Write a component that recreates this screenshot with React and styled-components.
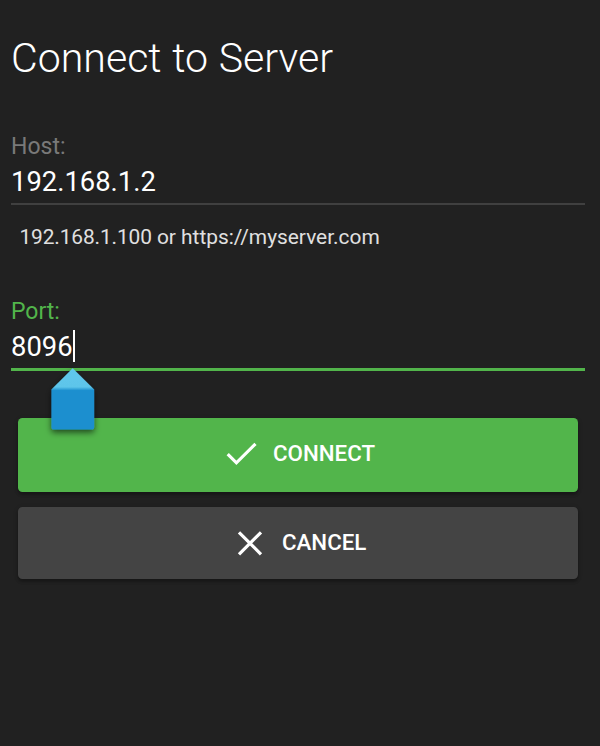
import React from 'react';
import styled, { createGlobalStyle, css } from 'styled-components';

const GlobalStyle = createGlobalStyle`
  * { box-sizing: border-box; }
  body {
    margin: 0;
    background: #212121;
    color: #fff;
    font-family: Roboto, "Liberation Sans", sans-serif;
  }
`;

const Page = styled.main`
  display: flex;
  flex-direction: column;
  height: 746px;
  padding: 34px 15px 0 11px;
  overflow: hidden;
  background: #212121;
`;

const Title = styled.h1`
  margin: 0 0 51px;
  font-size: 41.1px;
  line-height: 48px;
  font-weight: 300;
  word-spacing: 0.6px;
  white-space: nowrap;
`;

const Field = styled.div`
  display: flex;
  flex-direction: column;
  height: ${(p) => (p.$active ? '120px' : '165px')};
`;

const Label = styled.label`
  margin-bottom: 3px;
  font-size: 23px;
  line-height: 28px;
  color: ${(p) => (p.$active ? '#52b54b' : '#797979')};
`;

const Value = styled.div`
  position: relative;
  display: flex;
  height: ${(p) => (p.$active ? '42px' : '41px')};
  font-size: 27.4px;
  line-height: 36px;
  border-bottom: ${(p) => (p.$active ? '3px solid #52b54b' : '2px solid #404040')};
`;

const Hint = styled.div`
  margin: 18px 0 0 8.5px;
  font-size: 20.9px;
  line-height: 28px;
  color: #e0e0e0;
  white-space: nowrap;
`;

const Address = styled.span`
  letter-spacing: -0.13px;
`;

const Caret = styled.span`
  width: 2px;
  height: 32px;
  margin-top: 1px;
  background: #fff;
`;

const Handle = styled.svg`
  position: absolute;
  left: 30px;
  top: 36px;
  width: 64px;
  height: 76px;
  z-index: 1;
`;

const Actions = styled.div`
  display: flex;
  flex-direction: column;
  gap: 15.5px;
  padding: 0 7px;
`;

const Button = styled.button`
  display: flex;
  align-items: center;
  justify-content: flex-start;
  height: 72px;
  padding: 0 0 0 216px;
  border: 0;
  border-radius: 4.5px;
  background: #444;
  color: #fff;
  font: 500 22.3px/28px Roboto, "Liberation Sans", sans-serif;
  box-shadow: 0 3px 3px rgba(0, 0, 0, 0.22), 0 1px 5px rgba(0, 0, 0, 0.16);
  ${(p) => p.$primary && css`
    height: 73.5px;
    padding-left: 208px;
    padding-bottom: 1.5px;
    background: #52b54b;
  `}
`;

const Caption = styled.span`
  padding-bottom: 2px;
`;

const Icon = styled.svg`
  flex: none;
  width: 32px;
  height: 32px;
  margin-right: ${(p) => p.$gap};
  fill: none;
  stroke: #fff;
  stroke-width: 3.2;
`;

function SelectionHandle() {
  return (
    <Handle viewBox="0 0 64 76" aria-hidden="true">
      <defs>
        <linearGradient id="handleFill" x1="0" y1="3" x2="0" y2="64" gradientUnits="userSpaceOnUse">
          <stop offset="0" stopColor="#60c7ec" />
          <stop offset="0.31" stopColor="#5dc5ea" />
          <stop offset="0.37" stopColor="#1c8fcf" />
          <stop offset="1" stopColor="#1c8fcf" />
        </linearGradient>
        <filter id="handleShadow" x="-30%" y="-30%" width="160%" height="160%">
          <feDropShadow dx="0" dy="3" stdDeviation="3" floodColor="#000" floodOpacity="0.6" />
        </filter>
      </defs>
      <path
        d="M31.7 3.2 L53.2 24.5 V62 Q53.2 64.6 50.6 64.6 H13 Q10.4 64.6 10.4 62 V24.5 Z"
        fill="url(#handleFill)"
        filter="url(#handleShadow)"
      />
    </Handle>
  );
}

export default function App() {
  return (
    <>
      <GlobalStyle />
      <Page>
        <Title>Connect to Server</Title>
        <Field>
          <Label>Host:</Label>
          <Value>192.168.1.2</Value>
          <Hint>
            <Address>192.168.1.100</Address> or https://myserver.com
          </Hint>
        </Field>
        <Field $active>
          <Label $active>Port:</Label>
          <Value $active>
            8096
            <Caret />
            <SelectionHandle />
          </Value>
        </Field>
        <Actions>
          <Button $primary>
            <Icon $gap="15px" viewBox="0 0 32 32">
              <path d="M1.7 16.2 L10.4 24.8 L29.5 5.8" />
            </Icon>
            <Caption>CONNECT</Caption>
          </Button>
          <Button>
            <Icon $gap="16px" viewBox="0 0 32 32">
              <path d="M5 5.3 L27 27.3 M27 5.3 L5 27.3" />
            </Icon>
            <Caption>CANCEL</Caption>
          </Button>
        </Actions>
      </Page>
    </>
  );
}
